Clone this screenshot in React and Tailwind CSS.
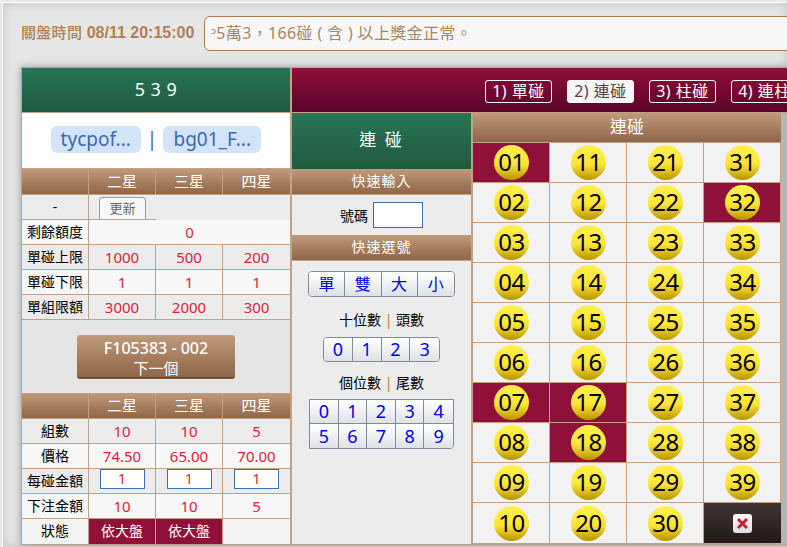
import React from "react";

const brown = "bg-[linear-gradient(#bf9a7b,#8f6647)]";

function StarHead() {
  return (
    <div className={`grid grid-cols-[67px_67px_67px_1fr] h-[26px] ${brown} border-b border-[#c4a184] text-white text-[15px] leading-[24px] text-center`}>
      <div className="border-r border-[#c4a184]"></div>
      <div className="border-r border-[#c4a184]">二星</div>
      <div className="border-r border-[#c4a184]">三星</div>
      <div>四星</div>
    </div>
  );
}

function Row({ label, values, shade }) {
  const bg = shade ? "bg-[#ececec]" : "bg-[#f7f7f7]";
  return (
    <div className={`grid grid-cols-[67px_67px_67px_1fr] h-[25px] border-b border-[#c4a184] text-[15px] leading-[24px] text-center ${bg}`}>
      <div className="border-r border-[#c4a184] text-black text-[14px]">{label}</div>
      {values.map((v, i) => (
        <div key={i} className={`text-[#e0203a] ${i < 2 ? "border-r border-[#c4a184]" : ""}`}>{v}</div>
      ))}
    </div>
  );
}

function Ball({ n }) {
  return (
    <div className="w-[35px] h-[35px] rounded-full bg-[linear-gradient(#fff04d_0%,#fde535_55%,#b89200_100%)] flex items-center justify-center text-black text-[24px] leading-none tracking-[-0.5px] pb-[1px]">
      {n}
    </div>
  );
}

const rows = [
  ["01", "11", "21", "31"],
  ["02", "12", "22", "32"],
  ["03", "13", "23", "33"],
  ["04", "14", "24", "34"],
  ["05", "15", "25", "35"],
  ["06", "16", "26", "36"],
  ["07", "17", "27", "37"],
  ["08", "18", "28", "38"],
  ["09", "19", "29", "39"],
  ["10", "20", "30", "x"],
];
const picked = ["01", "32", "07", "17", "18"];

function BallGrid() {
  return (
    <div className="grid grid-cols-[77px_77px_77px_77px] auto-rows-[40px] [&>*:nth-last-child(-n+4)]:h-[41px]">
      {rows.flat().map((n) => {
        if (n === "x") {
          return (
            <div key={n} className="border-b border-[#c4a184] bg-[linear-gradient(#3d3533,#231a18)] flex items-center justify-center">
              <div className="w-[19px] h-[19px] rounded-[3px] bg-[linear-gradient(#ffffff,#dcdcdc)] flex items-center justify-center">
                <svg width="13" height="13" viewBox="0 0 13 13">
                  <path d="M2 2 L11 11 M11 2 L2 11" stroke="#c4202f" strokeWidth="3" />
                </svg>
              </div>
            </div>
          );
        }
        const on = picked.includes(n);
        return (
          <div key={n} className={`border-b border-r border-[#c4a184] pl-[1px] flex items-center justify-center ${on ? "bg-[#8f1038]" : "bg-[#f2f2f2]"}`}>
            <Ball n={n} />
          </div>
        );
      })}
    </div>
  );
}

function BtnGroup({ items, cols, w, h, size }) {
  return (
    <div className={`grid ${cols} ${w} border border-[#7f8b9c] rounded-[4px] overflow-hidden`}>
      {items.map((t, i) => (
        <div key={t} className={`${h} ${size} bg-[linear-gradient(#ffffff,#dfe2e5)] text-[#0000ee] flex items-center justify-center border-[#7f8b9c] ${i < items.length - 1 ? "border-r" : ""}`}>
          {t}
        </div>
      ))}
    </div>
  );
}

function Digits() {
  const ds = ["0", "1", "2", "3", "4", "5", "6", "7", "8", "9"];
  return (
    <div className="grid grid-cols-5 w-[145px] border border-[#7f8b9c] rounded-br-[4px] overflow-hidden">
      {ds.map((d, i) => (
        <div key={d} className={`h-6 text-[18px] bg-[linear-gradient(#ffffff,#dfe2e5)] text-[#0000ee] flex items-center justify-center border-[#7f8b9c] ${i % 5 < 4 ? "border-r" : ""} ${i < 5 ? "border-b" : ""}`}>
          {d}
        </div>
      ))}
    </div>
  );
}

function Tab({ label, active }) {
  return (
    <div className={`h-[23px] w-[67px] rounded-[3px] border border-white text-[16px] leading-[20px] text-center tracking-[0.5px] shrink-0 whitespace-nowrap ${active ? "bg-[#f5f5f5] text-[#5a3d4a]" : "text-white"}`}>
      {label}
    </div>
  );
}

export default function App() {
  return (
    <div className="w-[787px] h-[547px] overflow-hidden bg-[#e8e8e8] pt-[2px] pl-[2px] font-['Noto_Sans','Noto_Sans_CJK_TC',sans-serif]">
      <div className="w-[785px] h-[545px] bg-[#e6e6e6] border-t border-l border-white shadow-[inset_0_0_12px_#c4c4c4]">
        <div className="flex items-center h-[64px] pl-[18px] pb-[4px]">
          <div className="text-[#ad8154] w-[183px] shrink-0 whitespace-nowrap font-['Liberation_Sans','Noto_Sans_CJK_TC',sans-serif]">
            <span className="text-[15px] font-medium tracking-[0.3px]">關盤時間</span>
            <span className="text-[16px] font-bold"> 08/11 20:15:00</span>
          </div>
          <div className="w-[600px] h-[35px] shrink-0 border border-[#b07d4f] rounded-[6px] bg-[#f7f7f7] text-[#a98560] text-[16px] leading-[32px] pl-[6px] tracking-[0.35px] whitespace-nowrap">
            ᵓ5萬3，166碰 ( 含 ) 以上獎金正常。
          </div>
        </div>

        <div className="ml-[18px] w-[770px] border-l border-t border-[#c4a184] shadow-[0_0_8px_#999] bg-[#f5f0ea]">
          <div className="flex h-[45px] border-b border-[#c4a184]">
            <div className="w-[268px] shrink-0 bg-[linear-gradient(#277556,#205a40)] text-white text-[18px] tracking-[0.5px] text-center leading-[42px]">5 3 9</div>
            <div className="w-[2px] shrink-0 bg-[#c4a184]"></div>
            <div className="flex-1 flex pl-[193px] pt-[12px] gap-[15px] bg-[linear-gradient(#8f1038,#5a0329)] overflow-hidden">
              <Tab label="1) 單碰" />
              <Tab label="2) 連碰" active />
              <Tab label="3) 柱碰" />
              <Tab label="4) 連柱" />
            </div>
          </div>

          <div className="flex border-b border-[#c4a184]">
            <div className="w-[268px] shrink-0">
              <div className="h-[56px] bg-white flex items-center justify-center gap-[6px] pb-[2px] text-[19px] text-[#3d68ad] border-b border-[#c4a184]">
                <div className="bg-[#d3e4fa] rounded-[6px] h-[27px] w-[90px] leading-[26px] text-center">tycpof...</div>
                <div>|</div>
                <div className="bg-[#d3e4fa] rounded-[6px] h-[27px] w-[98px] leading-[26px] text-center">bg01_F...</div>
              </div>
              <StarHead />
              <div className="grid grid-cols-[67px_67px_1fr] h-[25px] bg-[#ececec] text-center">
                <div className="border-r border-b border-[#c4a184] text-[14px] leading-[24px]">-</div>
                <div className="pl-[10px] pt-[2px] border-b border-[#c4a184]">
                  <div className="w-[47px] h-[22px] bg-[#f7f7f7] border border-b-0 border-[#999] rounded-t-[4px] text-[13px] leading-[21px] text-[#666]">更新</div>
                </div>
                <div></div>
              </div>
              <div className="grid grid-cols-[67px_1fr] h-[25px] bg-[#f7f7f7] border-b border-[#c4a184] text-center leading-[24px]">
                <div className="border-r border-[#c4a184] text-[14px]">剩餘額度</div>
                <div className="text-[#e0203a] text-[15px]">0</div>
              </div>
              <Row label="單碰上限" values={["1000", "500", "200"]} shade />
              <Row label="單碰下限" values={["1", "1", "1"]} />
              <Row label="單組限額" values={["3000", "2000", "300"]} shade />
              <div className="h-[73px] flex justify-center pt-[15px] bg-[#e5e5e5]">
                <div className="w-[158px] h-[44px] rounded-[3px] bg-[linear-gradient(#bf9a7b,#8f6647)] border-b-2 border-[#7a4f2c] text-white text-[16px] leading-[20px] text-center pt-[3px] font-medium">
                  F105383 - 002<br /><span className="text-[15px] font-normal">下一個</span>
                </div>
              </div>
              <StarHead />
              <Row label="組數" values={["10", "10", "5"]} shade />
              <Row label="價格" values={["74.50", "65.00", "70.00"]} />
              <div className="grid grid-cols-[67px_67px_67px_1fr] h-[25px] bg-[#ececec] border-b border-[#c4a184] text-center">
                <div className="border-r border-[#c4a184] text-[14px] leading-[24px]">每碰金額</div>
                {[0, 1, 2].map((i) => (
                  <div key={i} className={`${i < 2 ? "border-r border-[#c4a184]" : ""} flex justify-center`}>
                    <div className="w-[45px] h-[20px] bg-white border border-[#3d6fb0] text-[#e0203a] text-[14px] leading-[17px]">1</div>
                  </div>
                ))}
              </div>
              <Row label="下注金額" values={["10", "10", "5"]} />
              <div className="grid grid-cols-[67px_67px_67px_1fr] h-[25px] bg-[#f2f2f2] text-center text-[14px] leading-[24px]">
                <div className="border-r border-[#c4a184]">狀態</div>
                <div className="bg-[#8f1038] text-white border-r border-[#c4a184]">依大盤</div>
                <div className="bg-[#8f1038] text-white border-r border-[#c4a184]">依大盤</div>
                <div></div>
              </div>
            </div>

            <div className="w-[2px] shrink-0 bg-[#c4a184]"></div>

            <div className="w-[179px] shrink-0 bg-[#ececec] text-center">
              <div className="h-[56px] bg-[linear-gradient(#277556,#205a40)] text-white text-[17px] leading-[54px] tracking-[2px]">連 碰</div>
              <div className={`h-[26px] ${brown} border-b border-[#c4a184] text-white text-[14px] leading-[24px] tracking-[1px]`}>快速輸入</div>
              <div className="h-[40px] flex items-center justify-center gap-[5px] text-[14px]">
                <span>號碼</span>
                <div className="w-[50px] h-[26px] bg-white border border-[#3d6fb0]"></div>
              </div>
              <div className={`h-[26px] ${brown} border-b border-[#c4a184] text-white text-[14px] leading-[24px] tracking-[1px]`}>快速選號</div>
              <div className="flex flex-col items-center pt-[10px]">
                <BtnGroup items={["單", "雙", "大", "小"]} cols="grid-cols-4" w="w-[147px]" h="h-[24px]" size="text-[16px]" />
                <div className="mt-[13px] text-[14px] leading-[20px]">十位數 <span className="text-[#c57a1e]">|</span> 頭數</div>
                <div className="mt-[7px]">
                  <BtnGroup items={["0", "1", "2", "3"]} cols="grid-cols-4" w="w-[117px]" h="h-[23px]" size="text-[18px]" />
                </div>
                <div className="mt-[11px] text-[14px] leading-[20px]">個位數 <span className="text-[#c57a1e]">|</span> 尾數</div>
                <div className="mt-[6px]">
                  <Digits />
                </div>
              </div>
            </div>

            <div className="w-[2px] shrink-0 bg-[#c4a184]"></div>

            <div className="w-[308px] shrink-0">
              <div className={`h-[30px] ${brown} border-b border-[#c4a184] text-white text-[17px] leading-[27px] text-center`}>連碰</div>
              <BallGrid />
            </div>
            <div className="flex-1 bg-[#b5b5b5]"></div>
          </div>
        </div>
      </div>
    </div>
  );
}
